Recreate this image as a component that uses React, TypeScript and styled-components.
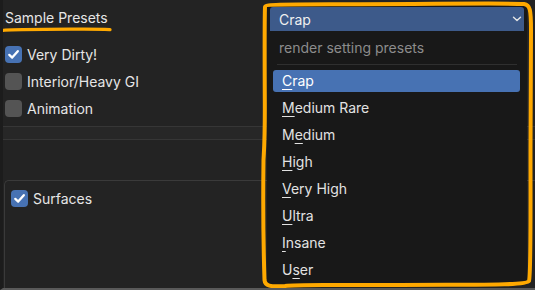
import React from "react";
import styled, { createGlobalStyle } from "styled-components";

const GlobalStyle = createGlobalStyle`
  html, body { margin: 0; padding: 0; background: #222222; }
  body { font-family: Inter, "Noto Sans", "DejaVu Sans", sans-serif; -webkit-font-smoothing: antialiased; }
  * { box-sizing: border-box; }
`;

const Page = styled.div`
  position: relative;
  width: 535px;
  height: 290px;
  overflow: hidden;
  background: #232323;
  border-left: 3px solid #1c1c1c;
  border-bottom: 2px solid #5a5a5a;
  display: flex;
  flex-direction: column;
  color: #e6e6e6;
  font-size: 14px;
`;

const Title = styled.div`
  height: 24px;
  line-height: 24px;
  margin-top: 6px;
  padding-left: 2px;
`;

const CheckList = styled.div`
  display: flex;
  flex-direction: column;
  margin-top: 11px;
  padding-left: 2px;
`;

const CheckRow = styled.div<{ $tight?: boolean }>`
  display: flex;
  align-items: center;
  gap: 5px;
  height: ${(p) => (p.$tight ? "17px" : "27px")};
`;

const Box = styled.span<{ $on?: boolean }>`
  width: 17px;
  height: 17px;
  border-radius: 4px;
  background: ${(p) => (p.$on ? "#4772b3" : "#545454")};
  display: flex;
  align-items: center;
  justify-content: center;
  flex: none;
`;

const Band = styled.div`
  margin-top: 4px;
  height: 14px;
  background: #272727;
  border-top: 1px solid #363636;
  border-bottom: 1px solid #363636;
`;

const SubPanel = styled.div`
  margin-top: 40px;
  margin-left: 1px;
  flex: 1;
  border: 1px solid #3a3a3a;
  border-bottom: none;
  border-right: none;
  border-radius: 5px 0 0 0;
  padding: 9px 0 0 6px;
`;

const Menu = styled.div`
  position: absolute;
  left: 264px;
  top: 6px;
  width: 260px;
  height: 278px;
  background: #181818;
  display: flex;
  flex-direction: column;
`;

const Header = styled.div`
  margin: 1px 3px 0 3px;
  height: 24px;
  background: #3d5a8a;
  border-radius: 3px 3px 0 0;
  display: flex;
  align-items: center;
  justify-content: space-between;
  padding: 0 2px 0 9px;
  color: #f0f0f0;
`;

const MenuTitle = styled.div`
  margin-top: 5px;
  height: 24px;
  line-height: 24px;
  padding-left: 12px;
  color: #8c8c8c;
`;

const Separator = styled.div`
  margin: 4px 10px 5px 10px;
  height: 1px;
  background: #2f2f2f;
`;

const Items = styled.div`
  display: flex;
  flex-direction: column;
  gap: 5px;
`;

const Item = styled.div<{ $active?: boolean }>`
  height: 22px;
  line-height: 22px;
  margin: 0 7px 0 6px;
  padding-left: 9px;
  border-radius: 3px;
  background: ${(p) => (p.$active ? "#4772b3" : "transparent")};
  color: ${(p) => (p.$active ? "#ffffff" : "#e2e2e2")};
`;

const Key = styled.span`
  text-decoration: underline;
  text-decoration-thickness: 1px;
  text-underline-offset: 3px;
`;

const Overlay = styled.svg`
  position: absolute;
  left: -3px;
  top: 0;
  pointer-events: none;
`;

const Check = () => (
  <svg width="13" height="13" viewBox="0 0 13 13">
    <path d="M2.3 6.9 L5.2 9.6 L10.8 3.2" fill="none" stroke="#fff" strokeWidth="2.3" strokeLinecap="round" strokeLinejoin="round" />
  </svg>
);

const Chevron = () => (
  <svg width="10" height="8" viewBox="0 0 10 8">
    <path d="M1.5 2.2 L5 5.6 L8.5 2.2" fill="none" stroke="#e6e6e6" strokeWidth="1.4" strokeLinecap="round" strokeLinejoin="round" />
  </svg>
);

const presets: [string, number][] = [
  ["Crap", 0],
  ["Medium Rare", 0],
  ["Medium", 1],
  ["High", 0],
  ["Very High", 0],
  ["Ultra", 0],
  ["Insane", 0],
  ["User", 1],
];

const Label = ({ text, k }: { text: string; k: number }) => (
  <>
    {text.slice(0, k)}
    <Key>{text[k]}</Key>
    {text.slice(k + 1)}
  </>
);

export default function App() {
  return (
    <>
      <GlobalStyle />
      <Page>
        <Title>Sample Presets</Title>
        <CheckList>
          <CheckRow>
            <Box $on>
              <Check />
            </Box>
            Very Dirty!
          </CheckRow>
          <CheckRow>
            <Box />
            Interior/Heavy GI
          </CheckRow>
          <CheckRow>
            <Box />
            Animation
          </CheckRow>
        </CheckList>
        <Band />
        <SubPanel>
          <CheckRow $tight>
            <Box $on>
              <Check />
            </Box>
            Surfaces
          </CheckRow>
        </SubPanel>

        <Menu>
          <Header>
            Crap
            <Chevron />
          </Header>
          <MenuTitle>render setting presets</MenuTitle>
          <Separator />
          <Items>
            {presets.map(([t, k], i) => (
              <Item key={t} $active={i === 0}>
                <Label text={t} k={k} />
              </Item>
            ))}
          </Items>
        </Menu>

        <Overlay width="535" height="290" viewBox="0 0 535 290">
          <path
            d="M2 30.5 C 8 29, 40 29.5, 70 29.2 C 90 29, 104 29.3, 110 29.6"
            fill="none"
            stroke="#ffa900"
            strokeWidth="3.2"
            strokeLinecap="round"
          />
          <path
            d="M265 7 C 265 4, 290 4.5, 360 4.2 C 440 4, 505 3, 524 4 C 530 5, 531 9, 531 30 L 530.5 150 C 530.5 230, 531 275, 529 281 C 526 286, 470 284.5, 400 285 C 330 285.5, 300 284, 285 286 C 270 287, 265 286, 264.5 280 C 263.5 250, 263 200, 263.5 160 C 264 150, 265 140, 264.8 100 C 264.6 60, 264.5 20, 265 7 Z"
            fill="none"
            stroke="#ffa900"
            strokeWidth="4"
            strokeLinejoin="round"
          />
        </Overlay>
      </Page>
    </>
  );
}
